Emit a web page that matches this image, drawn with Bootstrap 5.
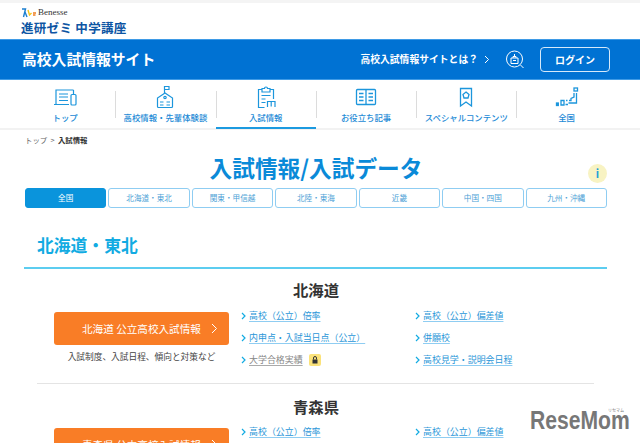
<!DOCTYPE html>
<html lang="ja">
<head>
  <meta charset="UTF-8">
  <meta name="viewport" content="width=device-width, initial-scale=1">
  <title>入試情報/入試データ</title>
  <link href="https://cdn.jsdelivr.net/npm/bootstrap@5.3.3/dist/css/bootstrap.min.css" rel="stylesheet">
  <style>
    html, body { height: 443px; overflow: hidden; }
    body { font-family: "Noto Sans CJK JP", "Noto Sans", sans-serif; background: #fff; color: #333; position: relative; }
    .top-strip { height: 3px; background: #f4f4f4; }
    .site-head { height: 36px; padding: 3px 0 0 21px; }
    .brand-line { height: 12px; gap: 1px; }
    .brand-name { font-family: "Liberation Serif", serif; font-size: 9px; color: #333; line-height: 12px; }
    .brand-title { font-size: 12.5px; font-weight: 700; color: #0d55a3; line-height: 17px; letter-spacing: .3px; margin-top: 1px; }
    .blue-bar { height: 41px; background: #0072d3; border-top: 1px solid #3f9be6; border-bottom: 1px solid #3f9be6; padding: 0 30px 0 22px; color: #fff; }
    .bar-title { font-size: 14.8px; font-weight: 700; }
    .bar-link { font-size: 9.8px; font-weight: 700; }
    .bar-chev { margin: 0 15px 0 6px; }
    .login-btn { width: 70px; height: 25px; border: 1px solid #d5e9fa; border-radius: 4px; font-size: 10px; font-weight: 700; margin-left: 15px; }
    .nav-row { height: 50px; border-bottom: 2px solid #f2f2f2; padding: 0 15px; }
    .nav-cell { width: 100.3px; height: 49px; position: relative; color: #1c8ad6; font-size: 8.4px; font-weight: 500; padding-top: 5px; }
    .nav-cell + .nav-cell::before { content: ""; position: absolute; left: 0; top: 11px; height: 27px; width: 1px; background: #dcdcdc; }
    .nav-cell.is-on { border-bottom: 2px solid #1c9ae0; }
    .nav-cell svg { height: 24px; width: 24px; margin-bottom: 2px; }
    .crumbs { font-size: 7.4px; padding: 5px 0 0 25px; height: 20px; line-height: 10px; color: #666; }
    .crumbs b { color: #333; font-weight: 700; }
    .page-title { font-size: 22.7px; font-weight: 700; color: #0a8ad8; line-height: 30px; text-align: center; margin: 3px 0 0; padding-right: 8px; height: 31px; }
    .info-dot { position: absolute; left: 588px; top: 164px; width: 19px; height: 19px; border-radius: 50%; background: #f8f3c3; color: #1e9fd8; font-size: 11px; font-weight: 700; line-height: 19px; text-align: center; }
    .area-tabs { margin: 4px 33px 0 25px; gap: 2px; }
    .area-tab { flex: 1 1 0; height: 20px; border: 1px solid #8fcdf2; border-radius: 3px; font-size: 7.6px; color: #4d9fd6; line-height: 18px; text-align: center; }
    .area-tab.is-on { background: #0a94dc; border-color: #0a94dc; color: #fff; }
    .area-head { margin: 25px 33px 0 24px; padding: 0 0 9px 13px; border-bottom: 2px solid #5ccdf0; font-size: 16.8px; font-weight: 700; color: #12abe2; line-height: 25px; }
    .pref-name { font-size: 15.3px; font-weight: 700; color: #333; line-height: 22px; text-align: center; padding-right: 8px; margin-top: 9px; }
    .pref-name.is-next { margin-top: 11px; }
    .pref-row { padding: 0 0 0 54px; margin-top: 12px; height: 71px; }
    .pref-row.is-next { margin-top: 11px; }
    .pref-left { width: 187px; }
    .orange-btn { width: 175px; height: 33px; background: #f97d26; border-radius: 3px; color: #fff; font-size: 10.6px; padding-left: 28px; position: relative; }
    .orange-btn svg { position: absolute; right: 11px; top: 11px; }
    .pref-note { width: 175px; text-align: center; font-size: 8.7px; color: #444; line-height: 12px; margin-top: 6px; }
    .link-col { width: 174px; margin-top: -2px; }
    .link-item { height: 22px; font-size: 8.95px; line-height: 12px; gap: 3px; display: flex; align-items: flex-start; }
    .link-item a { color: #2a96d8; text-decoration: underline; text-underline-offset: 2px; text-decoration-color: #8fcdf2; }
    .link-item a.is-locked { color: #888; text-decoration-color: #aaa; }
    .link-item svg { margin-top: 2px; flex: none; }
    .lock-tag { width: 12px; height: 12px; background: #fbe27a; border-radius: 2px; margin-left: 3px; }
    .pref-sep { margin: 0 46px 0 37px; border-top: 1px solid #e4e4e4; }
    .wm { position: absolute; left: 530px; top: 411px; font-family: "Liberation Sans", sans-serif; font-size: 25px; font-weight: 700; color: #777; line-height: 18px; transform: scaleX(.845); transform-origin: left top; }
    .wm-ruby { position: absolute; left: 608px; top: 408px; font-size: 4px; color: #777; line-height: 5px; }
  </style>
</head>
<body>
  <div class="top-strip"></div>

  <!-- logo -->
  <header class="site-head">
    <div class="brand-line d-flex align-items-center">
      <svg width="16" height="11" viewBox="0 0 16 11" fill="none" stroke-width="1.4">
        <path d="M1 2h3.500L2.500 10M4 5l2 5" stroke="#1c7fd0"/>
        <path d="M7 3l1.500 5 2-2" stroke="#f5c518"/>
        <path d="M12 6l3 0M12 8l2.500 0" stroke="#ef7d22"/>
      </svg>
      <span class="brand-name">Benesse</span>
    </div>
    <div class="brand-title">進研ゼミ 中学講座</div>
  </header>

  <div class="blue-bar d-flex align-items-center">
    <div class="bar-title">高校入試情報サイト</div>
    <div class="ms-auto d-flex align-items-center">
      <span class="bar-link">高校入試情報サイトとは？</span>
      <svg class="bar-chev" width="6" height="9" viewBox="0 0 6 9" fill="none" stroke="#fff" stroke-width="1"><path d="M1 1l3.500 3.500L1 8"/></svg>
      <svg width="20" height="21" viewBox="0 0 20 21" fill="none" stroke="#fff" stroke-width="1">
        <circle cx="9.500" cy="10" r="8"/>
        <path d="M15.500 16l3 3"/>
        <path d="M6 9h7v5.500H6zM8 9V7.500h3V9M9.500 5v2.500M8 11.500h3"/>
      </svg>
      <div class="login-btn d-flex align-items-center justify-content-center">ログイン</div>
    </div>
  </div>

  <!-- main menu -->
  <nav class="nav-row d-flex">
    <div class="nav-cell d-flex flex-column align-items-center">
      <svg viewBox="0 0 24 24" fill="none" stroke="#1c96dc" stroke-width="1.200">
        <path d="M1 19.500h15M3 19V5h17.500M20.500 9V5"/>
        <path d="M6 9h9M6 12h9M6 15.500h9"/>
        <rect x="18" y="9.500" width="5" height="10.500" rx="1"/>
      </svg>
      <span>トップ</span>
    </div>
    <div class="nav-cell d-flex flex-column align-items-center">
      <svg viewBox="0 0 24 24" fill="none" stroke="#1c96dc" stroke-width="1.200">
        <path d="M11.500 8V1.500h4.500v3h-4.500"/>
        <path d="M4.500 21.500V13l7.500-5 7.500 5v8.500a1 1 0 0 1-1 1h-13a1 1 0 0 1-1-1z"/>
        <circle cx="12" cy="12.500" r="1.200"/>
        <path d="M7 17h3.500M13.500 17H17M7 20h3.500M13.500 20H17"/>
      </svg>
      <span>高校情報・先輩体験談</span>
    </div>
    <div class="nav-cell is-on d-flex flex-column align-items-center">
      <svg viewBox="0 0 24 24" fill="none" stroke="#1c96dc" stroke-width="1.200">
        <path d="M8 4.500H4.500v18h6M16 4.500h3.500V14"/>
        <path d="M8 3.500h2.500a1.500 1.500 0 0 1 3 0H16v3.500H8z"/>
        <path d="M7.500 10.500h9M7.500 14h4M7.500 17.500h4"/>
        <path d="M13.500 22v-5.500h7.500V22M17.200 17v4.500"/>
      </svg>
      <span>入試情報</span>
    </div>
    <div class="nav-cell d-flex flex-column align-items-center">
      <svg viewBox="0 0 24 24" fill="none" stroke="#1c96dc" stroke-width="1.300">
        <rect x="2.500" y="4.500" width="19" height="15" rx="1"/>
        <path d="M12 4.500v15M5 8.500h4.500M5 12h4.500M5 15.500h4.500M14.500 8.500H19M14.500 12H19M14.500 15.500H19"/>
      </svg>
      <span>お役立ち記事</span>
    </div>
    <div class="nav-cell d-flex flex-column align-items-center">
      <svg viewBox="0 0 24 24" fill="none" stroke="#1c96dc" stroke-width="1.300">
        <path d="M6.500 3.500h11V21l-5.500-4-5.500 4z"/>
        <path d="M12 7l3 2.500-1 3.500h-4l-1-3.500z"/>
      </svg>
      <span>スペシャルコンテンツ</span>
    </div>
    <div class="nav-cell d-flex flex-column align-items-center">
      <svg viewBox="0 0 24 24" fill="none" stroke="#1c96dc" stroke-width="1.300">
        <rect x="19" y="3" width="3.500" height="3"/>
        <path d="M21.500 8v10l-8 0M19 8v4l-3 1.500v2h-2"/>
        <path d="M6 15.500h3v4.500H6zM11 15.500h1.500M10.500 19.500H13"/>
        <rect x="1.500" y="18" width="1.800" height="2.500" fill="#1c96dc"/>
      </svg>
      <span>全国</span>
    </div>
  </nav>

  <div class="crumbs">トップ &nbsp;&gt;&nbsp; <b>入試情報</b></div>

  <h1 class="page-title">入試情報/入試データ</h1>
  <div class="info-dot">i</div>

  <div class="area-tabs d-flex">
    <div class="area-tab is-on">全国</div>
    <div class="area-tab">北海道・東北</div>
    <div class="area-tab">関東・甲信越</div>
    <div class="area-tab">北陸・東海</div>
    <div class="area-tab">近畿</div>
    <div class="area-tab">中国・四国</div>
    <div class="area-tab">九州・沖縄</div>
  </div>

  <h2 class="area-head">北海道・東北</h2>

  <section>
    <div class="pref-name">北海道</div>
    <div class="pref-row d-flex">
      <div class="pref-left">
        <div class="orange-btn d-flex align-items-center">北海道 公立高校入試情報
          <svg width="7" height="11" viewBox="0 0 7 11" fill="none" stroke="#fff" stroke-width="1"><path d="M1 1l4.500 4.500L1 10"/></svg>
        </div>
        <div class="pref-note">入試制度、入試日程、傾向と対策など</div>
      </div>
      <div class="link-col">
        <div class="link-item">
          <svg width="5" height="8" viewBox="0 0 5 8" fill="none" stroke="#12abe2" stroke-width="1.200"><path d="M1 1l3 3-3 3"/></svg>
          <a href="#">高校（公立）倍率</a>
        </div>
        <div class="link-item">
          <svg width="5" height="8" viewBox="0 0 5 8" fill="none" stroke="#12abe2" stroke-width="1.200"><path d="M1 1l3 3-3 3"/></svg>
          <a href="#">内申点・入試当日点（公立）</a>
        </div>
        <div class="link-item">
          <svg width="5" height="8" viewBox="0 0 5 8" fill="none" stroke="#12abe2" stroke-width="1.200"><path d="M1 1l3 3-3 3"/></svg>
          <a class="is-locked" href="#">大学合格実績</a>
          <span class="lock-tag d-flex align-items-center justify-content-center">
            <svg width="6" height="8" viewBox="0 0 6 8" style="margin:0"><path d="M1.500 3.500V2a1.500 1.500 0 0 1 3 0v1.500" fill="none" stroke="#333" stroke-width="1"/><rect x=".5" y="3.500" width="5" height="4" fill="#333"/></svg>
          </span>
        </div>
      </div>
      <div class="link-col">
        <div class="link-item">
          <svg width="5" height="8" viewBox="0 0 5 8" fill="none" stroke="#12abe2" stroke-width="1.200"><path d="M1 1l3 3-3 3"/></svg>
          <a href="#">高校（公立）偏差値</a>
        </div>
        <div class="link-item">
          <svg width="5" height="8" viewBox="0 0 5 8" fill="none" stroke="#12abe2" stroke-width="1.200"><path d="M1 1l3 3-3 3"/></svg>
          <a href="#">併願校</a>
        </div>
        <div class="link-item">
          <svg width="5" height="8" viewBox="0 0 5 8" fill="none" stroke="#12abe2" stroke-width="1.200"><path d="M1 1l3 3-3 3"/></svg>
          <a href="#">高校見学・説明会日程</a>
        </div>
      </div>
    </div>
    <div class="pref-sep"></div>
  </section>

  <section>
    <div class="pref-name is-next">青森県</div>
    <div class="pref-row is-next d-flex">
      <div class="pref-left">
        <div class="orange-btn d-flex align-items-center">青森県 公立高校入試情報
          <svg width="7" height="11" viewBox="0 0 7 11" fill="none" stroke="#fff" stroke-width="1"><path d="M1 1l4.500 4.500L1 10"/></svg>
        </div>
      </div>
      <div class="link-col">
        <div class="link-item">
          <svg width="5" height="8" viewBox="0 0 5 8" fill="none" stroke="#12abe2" stroke-width="1.200"><path d="M1 1l3 3-3 3"/></svg>
          <a href="#">高校（公立）倍率</a>
        </div>
      </div>
      <div class="link-col">
        <div class="link-item">
          <svg width="5" height="8" viewBox="0 0 5 8" fill="none" stroke="#12abe2" stroke-width="1.200"><path d="M1 1l3 3-3 3"/></svg>
          <a href="#">高校（公立）偏差値</a>
        </div>
      </div>
    </div>
  </section>

  <div class="wm">ReseMom</div>
  <div class="wm-ruby">リセマム</div>

  <script src="https://cdn.jsdelivr.net/npm/bootstrap@5.3.3/dist/js/bootstrap.bundle.min.js"></script>
</body>
</html>
